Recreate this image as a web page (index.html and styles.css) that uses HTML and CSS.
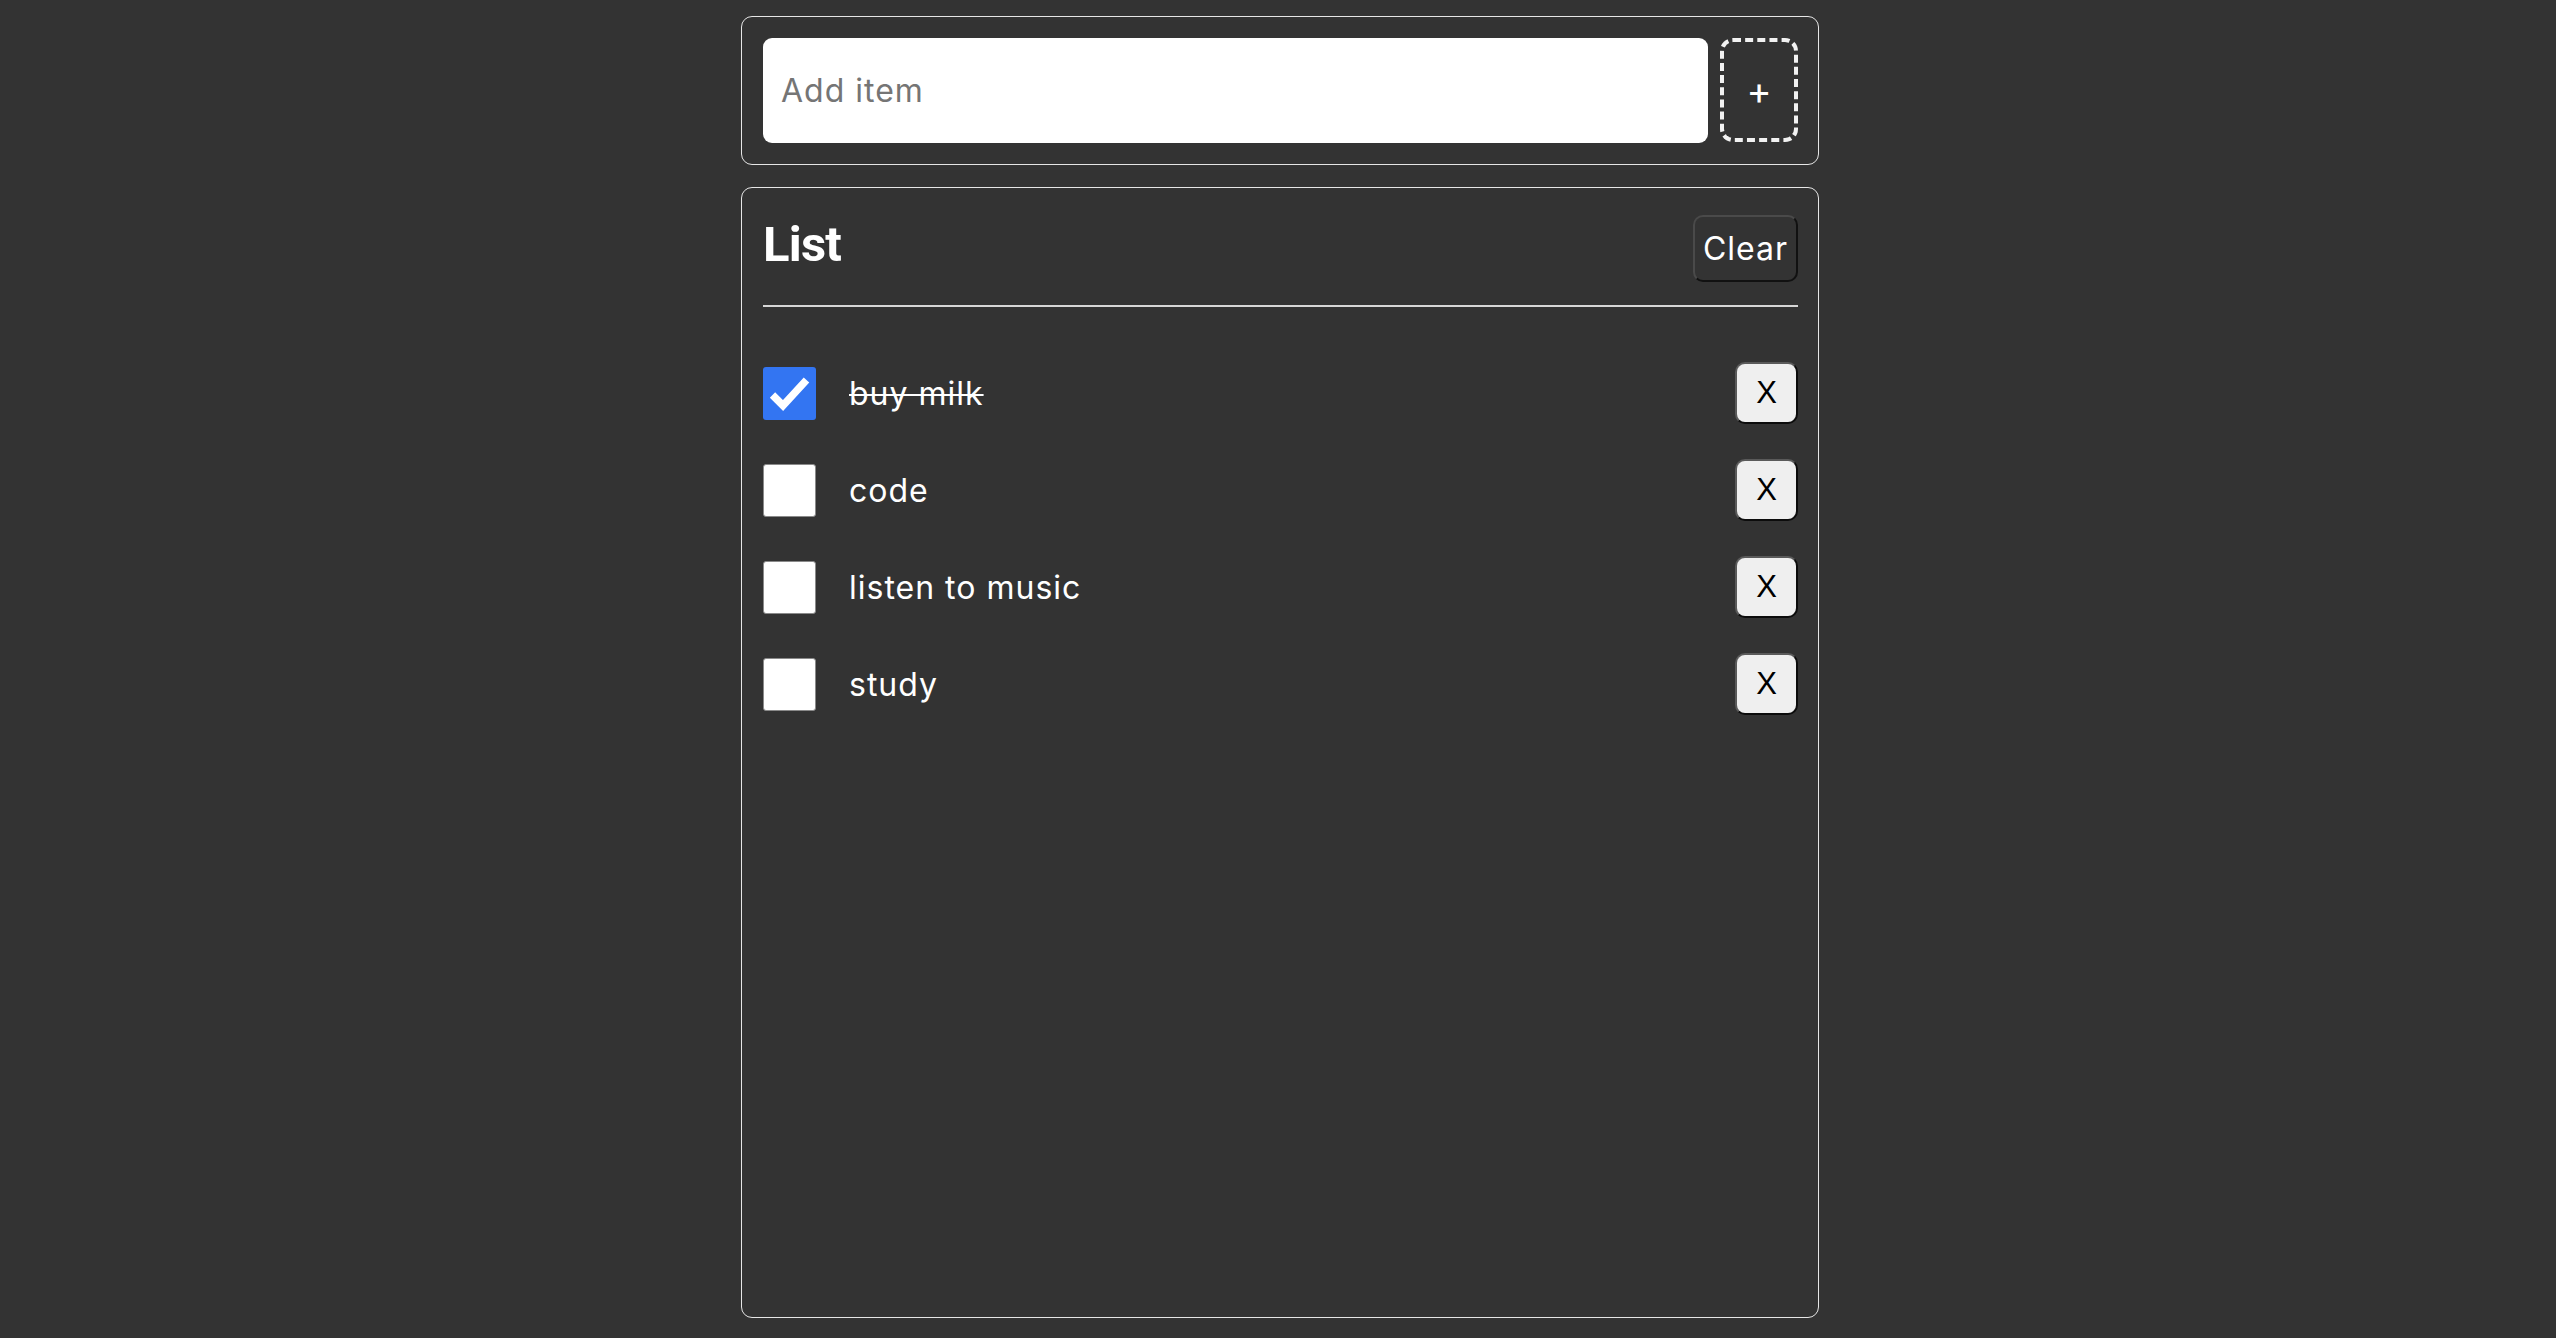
FILE: index.html
```html
<!DOCTYPE html>
<html lang="en">
<head>
<meta charset="utf-8">
<title>List</title>
<link rel="stylesheet" href="styles.css">
</head>
<body>
<main class="app">
  <form class="card add-card">
    <input class="add-input" type="text" placeholder="Add item">
    <button class="add-btn" type="button">+</button>
  </form>
  <section class="card list-card">
    <header class="list-head">
      <h1 class="list-title">List</h1>
      <button class="clear-btn" type="button">Clear</button>
    </header>
    <ul class="items">
      <li class="item done">
        <span class="check checked"><svg viewBox="0 0 53 53" width="53" height="53"><polyline points="9.5,28 20,38.5 43.5,13" fill="none" stroke="#fff" stroke-width="7.5" stroke-linejoin="miter"/></svg></span>
        <span class="item-text">buy milk</span>
        <button class="del-btn" type="button">X</button>
      </li>
      <li class="item">
        <span class="check"></span>
        <span class="item-text">code</span>
        <button class="del-btn" type="button">X</button>
      </li>
      <li class="item">
        <span class="check"></span>
        <span class="item-text">listen to music</span>
        <button class="del-btn" type="button">X</button>
      </li>
      <li class="item">
        <span class="check"></span>
        <span class="item-text">study</span>
        <button class="del-btn" type="button">X</button>
      </li>
    </ul>
  </section>
</main>
</body>
</html>
```
FILE: styles.css
```css
* { box-sizing: border-box; }
html, body { margin: 0; background: #333333; }
body { font-family: "Inter", "Open Sans", sans-serif; color: #fff; min-height: 1338px; padding-left: 4px; }
.app { width: 1078px; margin: 0 auto; padding-top: 16px; display: flex; flex-direction: column; gap: 22px; }
.card { border: 1px solid #e6e6e6; border-radius: 11px; padding: 21px 20px 21px 21px; }
.add-card { display: flex; gap: 12px; margin: 0; }
.add-input { flex: 1; height: 105px; border: none; border-radius: 9px; background: #fff; padding: 0 18px; font: 32px "Inter", sans-serif; letter-spacing: 1px; color: #222; outline: none; }
.add-input::placeholder { color: #757575; }
.add-btn { width: 78px; height: 104px; border: 4px dashed #f2f2f2; border-radius: 13px; background: transparent; color: #fff; font: 400 38px "Inter", sans-serif; padding: 0; line-height: 1; }
.list-card { height: 1131px; }
.list-head { display: flex; justify-content: space-between; align-items: center; padding: 6px 0 23px; border-bottom: 2px solid #d6d6d6; }
.list-title { margin: 0 0 7px 0; font: 700 49px "Roboto", sans-serif; letter-spacing: -0.8px; line-height: 58px; }
.clear-btn { height: 67px; padding: 0 8px; border: 2px solid; border-color: #4a4a4a #111 #111 #4a4a4a; border-radius: 10px; background: #333; color: #fff; font: 32px "Inter", sans-serif; letter-spacing: 1px; }
.items { list-style: none; margin: 0; padding: 55px 0 0; display: flex; flex-direction: column; gap: 35px; }
.item { display: flex; align-items: center; height: 62px; }
.check { width: 53px; height: 53px; flex: none; background: #fff; border: 1.5px solid #8a8a8a; border-radius: 3px; display: flex; }
.check.checked { background: #3375f2; border: none; }
.check svg { display: block; }
.item-text { flex: 1; margin-left: 33px; font-size: 32px; letter-spacing: 1px; }
.done .item-text { text-decoration: line-through; text-decoration-thickness: 2px; }
.del-btn { width: 63px; height: 62px; padding: 0; border: 2px solid; border-color: #5a5a5a #0c0c0c #0c0c0c #5a5a5a; border-radius: 10px; background: #efefef; color: #000; font: 31px "Liberation Sans", Arial, sans-serif; }
```
